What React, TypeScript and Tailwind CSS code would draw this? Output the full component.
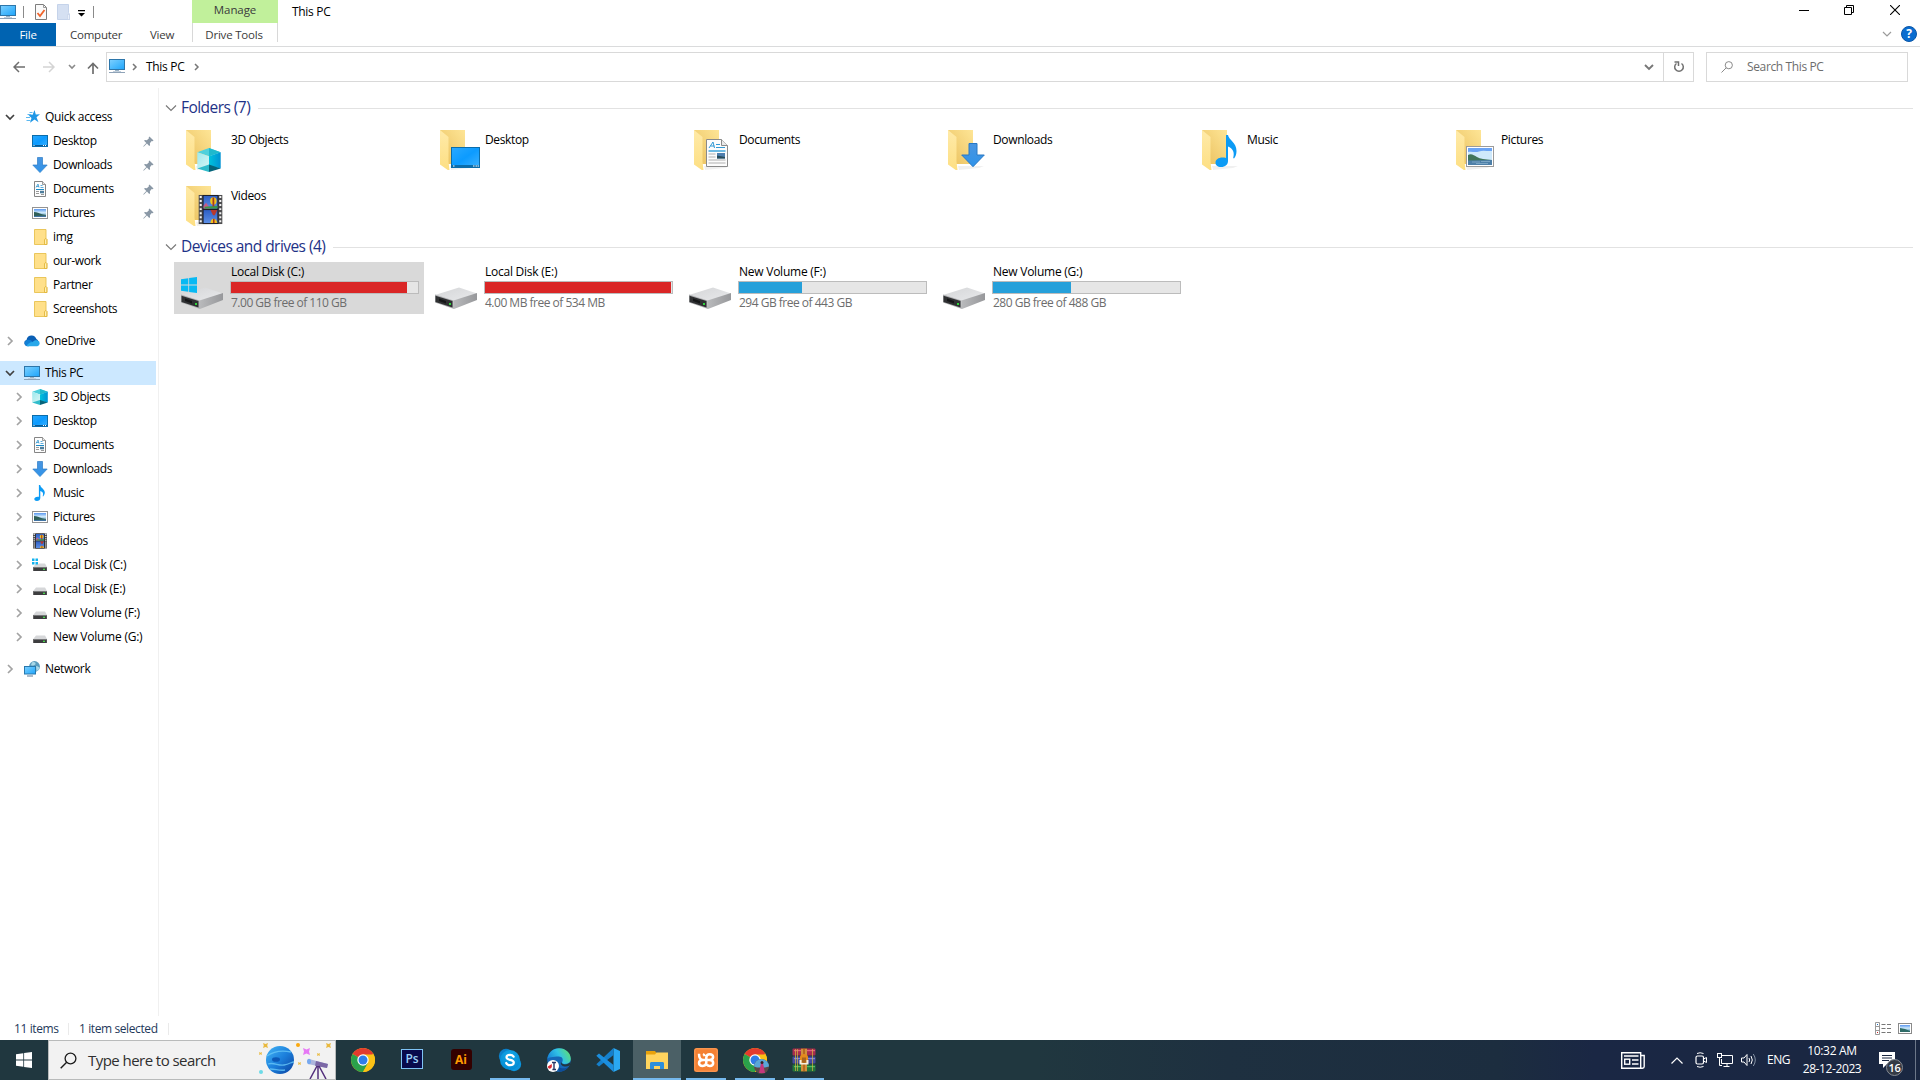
import React from "react";

type IconProps = { className?: string };

/* ---------- shared glyphs ---------- */

function Gradients() {
  return (
    <svg className="absolute h-0 w-0" aria-hidden="true">
      <defs>
        <linearGradient id="screen" x1="0" y1="0" x2="1" y2="1">
          <stop offset="0" stopColor="#7fd0ff" />
          <stop offset="0.5" stopColor="#4dbbfd" />
          <stop offset="1" stopColor="#1ea4fb" />
        </linearGradient>
        <linearGradient id="desk" x1="0" y1="0" x2="1" y2="1">
          <stop offset="0" stopColor="#2aa9ff" />
          <stop offset="0.5" stopColor="#0c9bff" />
          <stop offset="1" stopColor="#3db2ff" />
        </linearGradient>
        <linearGradient id="folderBack" x1="0" y1="1" x2="1" y2="0">
          <stop offset="0" stopColor="#e9bf5c" />
          <stop offset="1" stopColor="#fee596" />
        </linearGradient>
        <linearGradient id="folderFront" x1="0" y1="0" x2="0" y2="1">
          <stop offset="0" stopColor="#ffeaa8" />
          <stop offset="1" stopColor="#fddf83" />
        </linearGradient>
        <linearGradient id="photo" x1="0" y1="0" x2="0" y2="1">
          <stop offset="0" stopColor="#5a97f0" />
          <stop offset="0.45" stopColor="#cfeafb" />
          <stop offset="0.75" stopColor="#7fb0cc" />
          <stop offset="1" stopColor="#2d5f96" />
        </linearGradient>
        <linearGradient id="driveTop" x1="0" y1="0" x2="1" y2="1">
          <stop offset="0" stopColor="#d4d5d7" />
          <stop offset="1" stopColor="#e9eaec" />
        </linearGradient>
        <linearGradient id="driveSide" x1="0" y1="0" x2="1" y2="0">
          <stop offset="0" stopColor="#b9babc" />
          <stop offset="1" stopColor="#97989b" />
        </linearGradient>
        <linearGradient id="arrow" x1="0" y1="0" x2="0" y2="1">
          <stop offset="0" stopColor="#4a95e0" />
          <stop offset="1" stopColor="#2e93ea" />
        </linearGradient>
        <linearGradient id="sky" x1="0" y1="0" x2="0" y2="1">
          <stop offset="0" stopColor="#2e5fc4" />
          <stop offset="1" stopColor="#5c8fe6" />
        </linearGradient>
        <linearGradient id="cubeR" x1="0" y1="0" x2="1" y2="0">
          <stop offset="0" stopColor="#00c2dd" />
          <stop offset="1" stopColor="#0092d4" />
        </linearGradient>
        <linearGradient id="cubeL" x1="0" y1="0" x2="1" y2="1">
          <stop offset="0" stopColor="#9be9ee" />
          <stop offset="1" stopColor="#d9f5f4" />
        </linearGradient>
        <linearGradient id="planet" x1="0" y1="0" x2="1" y2="1">
          <stop offset="0" stopColor="#45b5f5" />
          <stop offset="0.5" stopColor="#1c80dc" />
          <stop offset="1" stopColor="#0a3f9e" />
        </linearGradient>
        <linearGradient id="edge" x1="0" y1="0.6" x2="1" y2="0.2">
          <stop offset="0" stopColor="#1583d8" />
          <stop offset="0.5" stopColor="#31c3e6" />
          <stop offset="1" stopColor="#62e06a" />
        </linearGradient>
        <radialGradient id="skype" cx="0.5" cy="0.3" r="0.8">
          <stop offset="0" stopColor="#14a8e8" />
          <stop offset="1" stopColor="#0086d0" />
        </radialGradient>
      </defs>
    </svg>
  );
}

const Monitor = ({ className = "h-4 w-4" }: IconProps) => (
  <svg viewBox="0 0 16 16" className={className}>
    <rect x="0.5" y="1.5" width="15" height="10" fill="url(#screen)" stroke="#2d76aa" />
    <rect x="6" y="12" width="4" height="1" fill="#9bb3c6" />
    <path d="M0 14h16v1H0z" fill="#8fa3b8" />
    <path d="M4 13h8v1H4z" fill="#c3d0dc" />
  </svg>
);

const Star = () => (
  <svg viewBox="0 0 16 16" className="ml-0.5 -mr-0.5 h-4 w-4">
    <path d="M8.500 1l1.300 4.500 4.200-.2-3.500 2.900 2 5-4-2.700L4 13.700 5.500 9 2.600 6.200l4-.4z" fill="#1f97e6" />
    <path d="M1.500 5.500h4M0 8.500h4M0.500 11.500h4M3.500 3.500h3" stroke="#5cb8f0" strokeWidth="1" />
  </svg>
);

const DesktopIcon = ({ className = "h-4 w-4" }: IconProps) => (
  <svg viewBox="0 0 16 16" className={className}>
    <rect x="0.5" y="2.5" width="15" height="11" fill="url(#desk)" stroke="#0b6dab" />
    <path d="M1 12.5h14" stroke="#0a5a94" strokeWidth="1" />
    <path d="M1.5 12.5h1M11 12.5h1M13 12.5h1" stroke="#fff" strokeWidth="1" />
  </svg>
);

const DownIcon = ({ className = "h-4 w-4" }: IconProps) => (
  <svg viewBox="0 0 16 16" className={className}>
    <path d="M5.5 0.5h5V8h4.7L8 15.6 0.8 8h4.7z" fill="url(#arrow)" stroke="#2b7cc7" strokeWidth="0.7" />
  </svg>
);

const DocIcon = ({ className = "h-4 w-4" }: IconProps) => (
  <svg viewBox="0 0 16 16" className={className}>
    <path d="M2.5 0.5h8l3 3v12h-11z" fill="#fdfdfd" stroke="#858585" />
    <path d="M10.5 0.5v3h3" fill="#e8e8e8" stroke="#858585" strokeWidth="0.8" />
    <path d="M4 6.500l2-3.500 1 3.500M4 5.500h3M8.500 4.500h2M8.500 6.500h3" stroke="#4aa3d6" strokeWidth="0.900" fill="none" />
    <path d="M4 8.500h8" stroke="#1a8ac8" />
    <path d="M4 10.500h3M4 12.500h3M9 13.500h3" stroke="#9a9a9a" />
    <rect x="8" y="9.800" width="4" height="2.500" fill="#4d7d9c" />
  </svg>
);

const PicIcon = ({ className = "h-4 w-4" }: IconProps) => (
  <svg viewBox="0 0 16 16" className={className}>
    <rect x="0.5" y="2.5" width="15" height="11" fill="#fff" stroke="#939393" />
    <rect x="2" y="4" width="12" height="8" fill="url(#photo)" />
    <path d="M2 7c3 .2 5 1.300 8 2.300L14 10v.7L2 11z" fill="#2f5f58" />
  </svg>
);

const FolderSmall = () => (
  <svg viewBox="0 0 16 16" className="h-4 w-4">
    <path d="M2.500 0.500h11.500v9l1 1v5H2.500z" fill="#ffe08a" stroke="#e8c14f" strokeWidth="0.9" />
    <path d="M12.500 15.500v-5l1.500-1 .8 1v5z" fill="#fff0b8" stroke="#dfb02d" strokeWidth="0.800" />
  </svg>
);

const Cloud = () => (
  <svg viewBox="0 0 16 16" className="h-4 w-4">
    <path d="M3 13a3 3 0 01-.5-5.900C3 3.500 5.500 2.300 7.800 2.500c2.200.2 4 1.500 4.600 3.600a3.500 3.500 0 012 3.400L8 13z" fill="#0a5fb5" />
    <path d="M2.300 7.300c2-1.300 4.500-.5 6.500 1.400L5 13.200H3.300a3.200 3.200 0 01-1-5.900z" fill="#1180d6" />
    <path d="M2.500 13.300c1-2.500 3.500-4.300 6.300-4.300 1-1.800 3.200-2.300 4.800-1.500a3 3 0 01-.3 5.800z" fill="#28a8ea" />
  </svg>
);

const Cube = ({ className = "h-4 w-4" }: IconProps) => (
  <svg viewBox="0 0 16 16" className={className}>
    <path d="M0.200 2.800L8 0l7.800 2.800L8 5.500z" fill="#4fd0dc" />
    <path d="M8 0l7.800 2.800L8 5.500z" fill="#1fb9cd" />
    <path d="M0.200 2.800L8 5.500V12l-7.800 1.600z" fill="url(#cubeL)" />
    <path d="M15.800 2.800L8 5.500V12l7.800 1.600z" fill="url(#cubeR)" />
    <path d="M0.200 13.600L8 11v5z" fill="#30bccb" />
    <path d="M15.800 13.600L8 11v5z" fill="#05637a" />
  </svg>
);

const Note = ({ className = "h-4 w-4" }: IconProps) => (
  <svg viewBox="0 0 16 16" className={className}>
    <path d="M6.900 0h1.300c.4 2.900 4.600 4.200 4.600 7.500 0 1.400-.6 2.800-1.700 4l-.4-.3c1-2.700.2-4.700-2.400-5.200V13c0 1.700-1.500 3-3.400 3-1.600 0-2.600-.9-2.600-2 0-1.500 1.700-2.600 4.600-2.200z" fill="#0c9bf5" />
  </svg>
);

const Film = ({ className = "h-4 w-4" }: IconProps) => (
  <svg viewBox="0 0 16 16" preserveAspectRatio="none" className={className}>
    <rect x="1" y="0.500" width="14" height="15" fill="#4d4d4f" />
    <path d="M2.200 1v14M13.800 1v14" stroke="#f2f2f2" strokeWidth="1.200" strokeDasharray="1 1.100" />
    <rect x="3.300" y="0.500" width="9.400" height="15" fill="#1c1c22" />
    <rect x="3.900" y="1" width="8.200" height="6.500" fill="url(#sky)" />
    <rect x="3.900" y="8.300" width="8.200" height="6.700" fill="url(#sky)" />
    <path d="M3.900 6l1.500-1.500 2.500 3h-4z" fill="#c65a86" />
    <path d="M4.500 6.600l7.600-.6v1.500H4.500z" fill="#3a9a4a" />
    <circle cx="9.700" cy="3.600" r="1.900" fill="#f2c51d" />
    <path d="M9.200 1.800h1l.1 4.700h-1.100z" fill="#a83a1d" />
    <path d="M8 8.300h4L10.500 11h-1z" fill="#b8382c" />
    <path d="M8 15c0-3 3.600-3 4 0z" fill="#f0c020" />
    <path d="M9.500 12.800h.9V15h-.9z" fill="#a8361d" />
  </svg>
);

const DriveSmall = ({ win }: { win?: boolean }) => (
  <svg viewBox="0 0 16 16" className="h-4 w-4">
    <path d="M4 6.500h9l2 3.500H1.200z" fill="#d6d7d9" />
    <rect x="1.200" y="10" width="13.700" height="4" fill="#3d3d3f" />
    <path d="M1.200 10h13.700v1H1.200z" fill="#77787a" />
    <rect x="11" y="11.700" width="2" height="1.200" fill="#4be84f" />
    {win && (
      <>
        <rect x="0" y="0" width="6.500" height="7" fill="#fff" />
        <path d="M0 1.500h2.500V4H0zM3.500 1.500H6V4H3.500zM0 5h2.500v2.500H0zM3.500 5H6v2.500H3.500z" fill="#12b2ee" />
      </>
    )}
  </svg>
);

const NetworkIcon = () => (
  <svg viewBox="0 0 16 16" className="h-4 w-4">
    <circle cx="10.500" cy="5.500" r="5.400" fill="#5a9cbd" />
    <path d="M8 1.500c2-1 4 0 3.500 1.500S8 5 7 4zM12 5c2 0 3 1 3.500 2-.500 1.500-2 3-3 3z" fill="#a9d8e8" />
    <rect x="0.500" y="5.500" width="11" height="7.500" fill="url(#screen)" stroke="#2878ad" />
    <path d="M3 15h6" stroke="#8aa0b4" strokeWidth="1.400" />
  </svg>
);

const Pin = () => (
  <svg viewBox="0 0 12 12" className="h-[11px] w-[11px]">
    <path d="M7 0.500l4.500 4.500-1 .8-1-.3-2 2.300.2 2.200-.9.800L4.300 8.300 0.800 11.800 0.300 11.200 3.600 7.600 1.200 5.200l.8-.9 2.200.2 2.300-2-.300-1z" fill="#8a98a6" />
  </svg>
);

/* ---------- large folder and drive icons ---------- */

const overlays: Record<string, React.ReactNode> = {
  "3D Objects": <div className="absolute left-[11px] top-[18px]"><Cube className="h-6 w-6" /></div>,
  Desktop: (
    <svg viewBox="0 0 29 21" className="absolute left-[11px] top-[17px] h-[21px] w-[29px]">
      <rect x="0.500" y="0.500" width="28" height="20" fill="url(#desk)" stroke="#0b6dab" />
      <path d="M1 19h27" stroke="#0b6dab" strokeWidth="2" />
      <path d="M2 19h1.500M22 19h1.500M24.500 19H26M26.500 19H28" stroke="#fff" strokeWidth="1.200" />
    </svg>
  ),
  Documents: (
    <svg viewBox="0 0 22 28" className="absolute left-[12px] top-[9px] h-7 w-[22px]">
      <path d="M0.500 0.500h15l6 6v21h-21z" fill="#fcfcfc" stroke="#8a8a8a" />
      <path d="M15.500 0.500v6h6" fill="#e9e9e9" stroke="#8a8a8a" />
      <path d="M3 9l4-6 1.500 6M4.500 7h3.800M10 5.500h4M10 8.500h9" stroke="#1c8fd0" strokeWidth="0.900" fill="none" />
      <path d="M2.500 12h17" stroke="#0f8fd3" strokeWidth="1.200" />
      <path d="M2.500 15h7M2.500 18h7M2.500 21h17M2.500 24h17" stroke="#b0b0b0" />
      <rect x="11" y="14" width="8" height="5.500" fill="#4f7fae" />
      <path d="M11 16.500l8 1.500v1.500h-8z" fill="#274c5a" />
    </svg>
  ),
  Downloads: (
    <svg viewBox="0 0 24 25" className="absolute left-[13px] top-[13px] h-[25px] w-6">
      <path d="M8 0.500h8V12h7.300L12 23.700 0.700 12H8z" fill="url(#arrow)" stroke="#2878c4" />
    </svg>
  ),
  Music: (
    <svg viewBox="0 0 22 34" className="absolute left-[13px] top-[4px] h-[34px] w-[22px]">
      <path d="M11 1h2c.8 5 8.500 7.500 8.500 16 0 3-.900 5.500-2.500 7.500l-.8-.5c1.700-6-.500-9.500-5.200-11.500v14.500c0 3.500-2.800 6-7 6-3.500 0-5.500-2-5.500-4.300 0-3.800 4.500-6.200 10.500-4.700z" fill="#0c9bf5" />
    </svg>
  ),
  Pictures: (
    <svg viewBox="0 0 28 21" className="absolute left-[10px] top-[16px] h-[21px] w-[28px]">
      <rect x="0.500" y="0.500" width="27" height="20" fill="#fff" stroke="#9b9b9b" />
      <rect x="2" y="2" width="24" height="17" fill="#6ba4f5" />
      <path d="M2 6c4-1 7 1 11-.5s9 0 13-.5v9H2z" fill="#cfe9fb" />
      <path d="M2 9c3-2 6 0 9 2s8 2.500 15 3v1H2z" fill="#40755b" />
      <path d="M2 14.500l24-.5v5H2z" fill="#4d7fa8" />
      <path d="M6 16h8M15 15.500h9M10 17.500h12" stroke="#8db4cf" strokeWidth="0.700" />
    </svg>
  ),
  Videos: <div className="absolute left-[11px] top-[8px]"><Film className="h-[31px] w-[27px]" /></div>,
};

function FolderLarge({ name }: { name: string }) {
  return (
    <div className="relative h-[42px] w-[42px] shrink-0">
      <svg viewBox="0 0 42 42" className="h-[42px] w-[42px]">
        <path d="M10 36h26l-5 2-20 2z" fill="#000" opacity="0.060" />
        <path d="M0 0h25v34H5z" fill="url(#folderBack)" />
        <path d="M0 0l8.500 7v24.500L9.500 40 7.800 40 0 34.500z" fill="url(#folderFront)" />
      </svg>
      {overlays[name]}
    </div>
  );
}

const WinLogo = ({ className }: IconProps) => (
  <svg viewBox="0 0 16 16" className={className}>
    <path d="M0 2.200L7.300 1.200v6.400H0zM8.100 1.100L16 0v7.600H8.100zM0 8.400h7.300v6.400L0 13.800zM8.100 8.400H16V16l-7.900-1.100z" fill="currentColor" />
  </svg>
);

const DriveLarge = ({ win }: { win?: boolean }) => (
  <div className="relative h-[34px] w-[44px] shrink-0">
    <svg viewBox="0 0 44 34" className="h-[34px] w-[44px]">
      <path d="M0 19l24-7.500L42 17.500l-23.500 8z" fill="url(#driveTop)" />
      <path d="M18.500 24.500L42 17v7L19 33z" fill="url(#driveSide)" />
      <path d="M0 18.500l18.500 6L19 33 0 26.500z" fill="#afb0b2" />
      <path d="M0.500 19.700l17 5.300v6.400L0.500 26z" fill="#2f3032" />
      <path d="M4 22.500l7 2.400v2.500L4 25z" fill="#151617" />
      <rect x="14" y="27" width="2" height="2" fill="#30d33c" />
    </svg>
    {win && <WinLogo className="absolute left-0 top-[1px] h-4 w-4 text-[#08b9f3]" />}
  </div>
);

/* ---------- explorer window ---------- */

const Chevron = ({ open, className = "" }: { open?: boolean; className?: string }) => (
  <svg viewBox="0 0 10 10" className={"h-[10px] w-[10px] shrink-0 " + className}>
    {open ? (
      <path d="M1 3l4 4 4-4" fill="none" stroke="#404040" strokeWidth="1.700" />
    ) : (
      <path d="M3 1l4 4-4 4" fill="none" stroke="#a3a3a3" strokeWidth="1.700" />
    )}
  </svg>
);

function TitleBar() {
  return (
    <div className="flex h-[47px] shrink-0 border-b border-[#dadbdc]">
      <div className="flex w-[192px] flex-col">
        <div className="flex h-[23px] items-center">
          <Monitor />
          <div className="ml-[7px] h-3 w-px bg-[#8a8a8a]" />
          <svg viewBox="0 0 12 16" className="ml-[11px] h-4 w-3">
            <path d="M0.500 0.500h8l3 3v12H0.500z" fill="#fafafa" stroke="#7d7d7d" />
            <path d="M8.500 0.500v3h3" fill="none" stroke="#9a9a9a" />
            <path d="M2.500 9l2.500 3 4.500-6" fill="none" stroke="#f0642b" strokeWidth="1.800" />
          </svg>
          <svg viewBox="0 0 13 16" className="ml-[10px] h-4 w-[13px]">
            <path d="M0.500 0.500h11v8l1 2v5h-12z" fill="#d5e0f2" stroke="#c5d3ea" />
            <path d="M10.500 15.500v-5h2v5z" fill="#eaf0f9" stroke="#c5d3ea" strokeWidth="0.700" />
          </svg>
          <svg viewBox="0 0 7 7" className="ml-2 mt-[3px] h-[7px] w-[7px]">
            <path d="M0 0h7v1.300H0zM0 3h7L3.500 6.500z" fill="#000" />
          </svg>
          <div className="ml-[8px] h-3 w-px bg-[#8a8a8a]" />
        </div>
        <div className="flex h-[23px] items-center text-[11.5px] tracking-[-0.240px] text-[#3b3b3b]">
          <div className="flex h-full w-14 items-center justify-center bg-[#0063b1] text-white">File</div>
          <div className="ml-[14px] w-[51px]">Computer</div>
          <div className="ml-[29px]">View</div>
        </div>
      </div>
      <div className="w-[86px] text-center text-[11.5px] tracking-[-0.200px] text-[#3b3b3b]">
        <div className="h-[23px] bg-[#c1f09b] leading-[20px] tracking-[-0.100px]">Manage</div>
        <div className="h-[19px] border-x border-[#d8d8d8] pr-[2px] leading-[23px]">Drive Tools</div>
      </div>
      <div className="ml-[14px] text-[12px] leading-[24px] tracking-[-0.3px]">This PC</div>
      <div className="ml-auto flex flex-col">
        <div className="flex h-[23px] text-black">
          <svg viewBox="0 0 10 10" className="ml-[3px] mt-[5px] h-[10px] w-[10px]"><path d="M0 5.500h10" stroke="#000" /></svg>
          <svg viewBox="0 0 10 10" className="ml-[35px] mt-[5px] h-[10px] w-[10px]">
            <path d="M0.500 2.500h7v7h-7zM2.500 2.500v-2h7v7h-2" fill="none" stroke="#000" />
          </svg>
          <svg viewBox="0 0 10 10" className="ml-[36px] mr-[20px] mt-[5px] h-[10px] w-[10px]"><path d="M0 0l10 10M10 0L0 10" stroke="#000" strokeWidth="1.100" /></svg>
        </div>
        <div className="flex items-center justify-end">
          <svg viewBox="0 0 10 6" className="mr-[9px] mt-[2px] h-[6px] w-[10px]"><path d="M1 1l4 4 4-4" fill="none" stroke="#9b9b9b" strokeWidth="1.200" /></svg>
          <div className="mr-[3px] mt-[3px] flex h-4 w-4 items-center justify-center rounded-full border border-[#0a56a8] bg-[#0a6dd0] text-[12px] font-bold leading-none text-white">?</div>
        </div>
      </div>
    </div>
  );
}

const Crumb = () => (
  <svg viewBox="0 0 6 8" className="h-2 w-[6px]"><path d="M1 1l3 3-3 3" fill="none" stroke="#777" strokeWidth="1.500" /></svg>
);

function AddressBar() {
  return (
    <div className="flex h-[41px] shrink-0 items-start pt-[5px]">
      <div className="flex h-[30px] w-[106px] shrink-0 items-center">
        <svg viewBox="0 0 12 12" className="ml-[13px] h-3 w-3"><path d="M12 6H1.500M6 1L1 6l5 5" fill="none" stroke="#6e6e6e" strokeWidth="1.500" /></svg>
        <svg viewBox="0 0 12 12" className="ml-[18px] h-3 w-3"><path d="M0 6h10.500M6 1l5 5-5 5" fill="none" stroke="#d4d4d4" strokeWidth="1.500" /></svg>
        <svg viewBox="0 0 8 6" className="ml-[13px] h-[6px] w-2"><path d="M1 1l3 3 3-3" fill="none" stroke="#8a8a8a" strokeWidth="1.600" /></svg>
        <svg viewBox="0 0 12 12" className="ml-[11px] mt-[2px] h-3 w-3"><path d="M6 12V1.500M1 6.500l5-5 5 5" fill="none" stroke="#6e6e6e" strokeWidth="1.700" /></svg>
      </div>
      <div className="flex h-[30px] w-[1588px] shrink-0 items-center border border-[#d9d9d9] text-[12px] tracking-[-0.3px]">
        <div className="ml-[2px] mt-[-2px]"><Monitor /></div>
        <div className="ml-[7px]"><Crumb /></div>
        <div className="ml-[8px] w-[39px] whitespace-nowrap">This PC</div>
        <div className="ml-[9px]"><Crumb /></div>
        <svg viewBox="0 0 10 7" className="ml-auto mr-[9px] h-[7px] w-[10px]"><path d="M1 1l4 4 4-4" fill="none" stroke="#777" strokeWidth="1.900" /></svg>
        <div className="flex h-full w-[30px] items-center justify-center border-l border-[#d9d9d9]">
          <svg viewBox="0 0 12 12" className="h-3 w-3"><path d="M8.500 2.500A4.300 4.300 0 113.500 2.500" fill="none" stroke="#707070" strokeWidth="1.500" /><path d="M1.500 1h4v4" fill="none" stroke="#707070" strokeWidth="1.500" /></svg>
        </div>
      </div>
      <div className="ml-3 flex h-[30px] w-[202px] items-center border border-[#d9d9d9] text-[12px] tracking-[-0.370px] text-[#6d6d6d]">
        <svg viewBox="0 0 12 12" className="ml-[14px] mr-[14px] h-3 w-3"><circle cx="7.800" cy="4.200" r="3.600" fill="none" stroke="#8a8a8a" /><path d="M5.200 6.800L0.500 11.500" stroke="#8a8a8a" /></svg>
        Search This PC
      </div>
    </div>
  );
}

type Row = { label: string; icon: React.ReactNode; pinned?: boolean; exp?: boolean };

const quick: Row[] = [
  { label: "Desktop", icon: <DesktopIcon />, pinned: true },
  { label: "Downloads", icon: <DownIcon />, pinned: true },
  { label: "Documents", icon: <DocIcon />, pinned: true },
  { label: "Pictures", icon: <PicIcon />, pinned: true },
  { label: "img", icon: <FolderSmall /> },
  { label: "our-work", icon: <FolderSmall /> },
  { label: "Partner", icon: <FolderSmall /> },
  { label: "Screenshots", icon: <FolderSmall /> },
];

const pc: Row[] = [
  { label: "3D Objects", icon: <Cube />, exp: true },
  { label: "Desktop", icon: <DesktopIcon />, exp: true },
  { label: "Documents", icon: <DocIcon />, exp: true },
  { label: "Downloads", icon: <DownIcon />, exp: true },
  { label: "Music", icon: <Note />, exp: true },
  { label: "Pictures", icon: <PicIcon />, exp: true },
  { label: "Videos", icon: <Film />, exp: true },
  { label: "Local Disk (C:)", icon: <DriveSmall win />, exp: true },
  { label: "Local Disk (E:)", icon: <DriveSmall />, exp: true },
  { label: "New Volume (F:)", icon: <DriveSmall />, exp: true },
  { label: "New Volume (G:)", icon: <DriveSmall />, exp: true },
];

/* Labels with a drive letter are set a little looser than plain ones. */
const labelTracking = (label: string) => (label.endsWith(":)") ? "tracking-[-0.230px]" : "tracking-[-0.380px]");

const Root = ({ label, icon, open, selected }: { label: string; icon: React.ReactNode; open?: boolean; selected?: boolean }) => (
  <div className={"flex h-6 w-[156px] items-center " + (selected ? "bg-[#cce8ff]" : "")}>
    <Chevron open={open} className="ml-[5px] mr-[9px]" />
    {icon}
    <span className="ml-[5px]">{label}</span>
  </div>
);

const Child = ({ row }: { row: Row }) => (
  <div className="flex h-6 w-[156px] items-center">
    <div className="flex w-8 justify-center pl-[5px]">{row.exp && <Chevron />}</div>
    {row.icon}
    <span className={"ml-[5px] " + labelTracking(row.label)}>{row.label}</span>
    {row.pinned && <div className="ml-auto mr-[2px]"><Pin /></div>}
  </div>
);

function Sidebar() {
  return (
    <div className="w-[159px] shrink-0 whitespace-nowrap border-r border-[#f0f0f0] pt-[17px] text-[12px] tracking-[-0.340px]">
      <Root label="Quick access" icon={<Star />} open />
      {quick.map((r) => <Child key={r.label} row={r} />)}
      <div className="mt-2"><Root label="OneDrive" icon={<Cloud />} /></div>
      <div className="mt-2"><Root label="This PC" icon={<Monitor />} open selected /></div>
      {pc.map((r) => <Child key={r.label} row={r} />)}
      <div className="mt-2"><Root label="Network" icon={<NetworkIcon />} /></div>
    </div>
  );
}

const GroupHeading = ({ title, count }: { title: string; count: number }) => (
  <div className="flex h-6 items-center text-[15.500px] tracking-[-0.550px] text-[#1e3287]">
    <svg viewBox="0 0 12 8" className="mr-[4px] h-2 w-3"><path d="M1 1.500l5 5 5-5" fill="none" stroke="#7a7a7a" strokeWidth="1.200" /></svg>
    <span>{title} ({count})</span>
    <div className="ml-2 mr-[7px] h-px flex-1 bg-[#e2e2e2]" />
  </div>
);

const folders = ["3D Objects", "Desktop", "Documents", "Downloads", "Music", "Pictures", "Videos"];

const drives = [
  { name: "Local Disk (C:)", free: "7.00 GB free of 110 GB", used: 94, full: true, win: true },
  { name: "Local Disk (E:)", free: "4.00 MB free of 534 MB", used: 99.400, full: true },
  { name: "New Volume (F:)", free: "294 GB free of 443 GB", used: 33.700 },
  { name: "New Volume (G:)", free: "280 GB free of 488 GB", used: 41.500 },
];

function Main() {
  return (
    <div className="flex-1 whitespace-nowrap pl-[6px] pt-[8px] text-[12px] tracking-[-0.350px]">
      <GroupHeading title="Folders" count={7} />
      <div className="ml-[9px] mt-[4px] grid grid-cols-[repeat(6,250px)] gap-x-1 gap-y-1">
        {folders.map((f) => (
          <div key={f} className="flex h-[52px] pl-[12px] pt-[6px]">
            <FolderLarge name={f} />
            <span className="ml-[3px] mt-[2px] h-4 leading-4">{f}</span>
          </div>
        ))}
      </div>
      <div className="mt-[3px]"><GroupHeading title="Devices and drives" count={4} /></div>
      <div className="ml-[9px] mt-[3px] flex gap-1">
        {drives.map((d) => (
          <div key={d.name} className={"flex h-[52px] w-[250px] pl-[7px] " + (d.win ? "bg-[#d9d9d9]" : "")}>
            <div className="pt-[14px]"><DriveLarge win={d.win} /></div>
            <div className="ml-[5px] w-[189px]">
              <div className="ml-px mt-[2px] h-[17px] leading-4 tracking-[-0.240px]">{d.name}</div>
              <div className="h-[13px] border border-[#bcbcbc] bg-[#e6e6e6]">
                <div className={"h-full " + (d.full ? "bg-[#da2626]" : "bg-[#26a0da]")} style={{ width: `${d.used}%` }} />
              </div>
              <div className="ml-px mt-px h-4 leading-4 tracking-[-0.500px] text-[#6d6d6d]">{d.free}</div>
            </div>
          </div>
        ))}
      </div>
    </div>
  );
}

function StatusBar() {
  return (
    <div className="flex h-6 shrink-0 items-center pl-[14px] pt-px text-[12px] tracking-[-0.400px] text-[#1e395b]">
      <span className="w-[54px]">11 items</span>
      <div className="h-3 w-px bg-[#eaeaea]" />
      <span className="ml-[10px] w-[89px] whitespace-nowrap">1 item selected</span>
      <div className="h-3 w-px bg-[#eaeaea]" />
      <svg viewBox="0 0 16 13" className="mb-px ml-auto mr-[7px] h-[13px] w-4">
        <path d="M0.500 0.500h4v12h-4zM0.500 4.500h4M0.500 8.500h4" fill="none" stroke="#999" />
        <path d="M6.500 2.500h4M12 2.500h4M6.500 6.500h4M12 6.500h4M6.500 10.500h4M12 10.500h4" stroke="#777" />
        <path d="M2 10.500h1" stroke="#c22" />
        <path d="M2 2.500h1" stroke="#1a6fc0" />
      </svg>
      <svg viewBox="0 0 14 11" className="mb-px mr-2 h-[11px] w-[14px]">
        <rect x="0.500" y="0.500" width="13" height="10" fill="#fff" stroke="#8a8a8a" />
        <rect x="2" y="2" width="10" height="7" fill="url(#photo)" />
        <path d="M2 5l5 1 5 2v1H2z" fill="#2e6b66" />
      </svg>
    </div>
  );
}

/* ---------- taskbar ---------- */

const Chrome = () => (
  <svg viewBox="0 0 24 24" className="h-6 w-6">
    <circle cx="12" cy="12" r="12" fill="#fbc116" />
    <path d="M12 12L1.610 6A12 12 0 0122.390 6z" fill="#e33b2e" />
    <path d="M1.610 6A12 12 0 0012 24l5.200-9-5.200-3z" fill="#2aa14b" />
    <path d="M12 6.500h10.700A12 12 0 0112 24l5-9z" fill="#fbc116" />
    <circle cx="12" cy="12" r="5.700" fill="#fff" />
    <circle cx="12" cy="12" r="4.500" fill="#2f7de9" />
  </svg>
);

const Skype = () => (
  <svg viewBox="0 0 24 24" className="h-6 w-6">
    <circle cx="8" cy="8" r="7.200" fill="#0a7fc9" />
    <circle cx="16" cy="16" r="7.200" fill="#0a94dd" />
    <circle cx="12" cy="12" r="10" fill="url(#skype)" />
    <path d="M15.600 8.700c-.8-1.300-2-1.800-3.600-1.800-2 0-3.500.9-3.500 2.400 0 3.500 7.300 1.700 7.300 5.200 0 1.700-1.500 2.700-3.700 2.700-1.900 0-3.200-.7-3.900-2.200" fill="none" stroke="#fff" strokeWidth="2.200" strokeLinecap="round" />
  </svg>
);

const Edge = () => (
  <svg viewBox="0 0 24 24" className="h-6 w-6">
    <circle cx="12" cy="12" r="11.800" fill="#1668b8" />
    <path d="M0.300 11C1.500 4 6.500 0.200 12 0.200c7 0 11.800 5 11.800 10.600 0 3.500-2.800 5.200-6 5.200-2.500 0-3.300-1-2.500-2.300 1.200-2 .2-5.200-3.500-5.200C6 8.500 1 9.500 0.300 11z" fill="url(#edge)" />
    <path d="M9 13c-1 4 3 7.500 7.500 7.300 2 0 4-.7 5-1.500A12 12 0 0112 23.800" fill="#0e4d9a" />
    <path d="M14 14c1 3 6 3.500 9.700 0l-1 3.500c-4 2.500-10 .5-8.700-3.500z" fill="#22373f" />
    <circle cx="6" cy="18" r="6" fill="#fff" />
    <path d="M5 14.500h4M7 14.500v7M5.400 21.500H9" stroke="#2a3664" strokeWidth="1.400" fill="none" />
    <path d="M0.800 18.500l4-2.500v3c-1 2-2.500 2-3.500 1z" fill="#dc2a35" />
  </svg>
);

const VSCode = () => (
  <svg viewBox="0 0 24 24" className="h-6 w-6">
    <path d="M17.500 0L24 3v18l-6.500 3z" fill="#2aa8f2" />
    <path d="M17.500 0v7L3 18.500 0.300 16.300z" fill="#1580cc" />
    <path d="M17.500 24v-7L3 5.500 0.300 7.700z" fill="#1b8ede" />
  </svg>
);

const ExplorerIcon = () => (
  <svg viewBox="0 0 22 18" className="h-[18px] w-[22px]">
    <path d="M0 0h9l1.500 2H22v16H0z" fill="#e8a20c" />
    <path d="M0 3.500h9L10.500 1.500H22V18H0z" fill="#ffd45e" />
    <path d="M4 18v-5.500c0-1 .7-1.500 1.500-1.500h11c.8 0 1.500.500 1.500 1.500V18h-4v-3H8v3z" fill="#2d8fdb" />
  </svg>
);

const Xampp = () => (
  <svg viewBox="0 0 24 24" className="h-6 w-6">
    <rect width="24" height="24" rx="2.500" fill="#f58133" />
    <rect x="0.800" y="0.800" width="22.400" height="22.400" rx="2" fill="none" stroke="#fba467" strokeWidth="0.800" />
    <path d="M5 5.800c0 3.600 1.200 6.200 4.200 6.200h6.300c2.300 0 3.600-1.200 3.600-2.900 0-1.800-1.400-2.900-3.300-2.900-2.100 0-3.500 1.300-3.500 3.300v5c0 2.100-1.300 3.400-3.500 3.400-2.300 0-3.800-1.100-3.800-2.900S6.600 12 9 12M15.500 12c2.300 0 3.700 1.200 3.700 3s-1.400 2.900-3.400 2.900c-1.200 0-2.300-.5-2.900-1.400M9 6c1 .5 1.500 1.200 1.800 2.200" fill="none" stroke="#fff" strokeWidth="2.500" />
  </svg>
);

const WinRar = () => (
  <svg viewBox="0 0 24 24" className="h-6 w-6">
    <rect x="0.500" y="0.500" width="23" height="7" rx="1" fill="#a72d4e" />
    <path d="M2 2h21v1.200H2z" fill="#e0607e" />
    <rect x="0.500" y="8.500" width="23" height="7" rx="1" fill="#474a9e" />
    <path d="M2 10h21v1.200H2z" fill="#7f84d8" />
    <rect x="0.500" y="16.500" width="23" height="7" rx="1" fill="#23743c" />
    <path d="M2 18h21v1.200H2z" fill="#4fbd64" />
    <path d="M3.500 1v22M5.500 1v22M20.500 1v22" stroke="#d5b93d" strokeWidth="0.700" />
    <rect x="9" y="0.500" width="6" height="23" fill="#b96a20" />
    <path d="M10 1v22M14 1v22" stroke="#e9b95a" />
    <path d="M8 9c0-4 8-4 8 0v3H8z" fill="#e58a1c" />
    <path d="M7.500 12h2v3h5v-3h2v4.500h-9z" fill="#f5efe0" />
    <rect x="10" y="9.500" width="4" height="5" fill="#a8641e" />
  </svg>
);

const SpaceArt = () => (
  <svg viewBox="0 0 76 38" className="h-[38px] w-[76px]">
    <circle cx="22" cy="19" r="14" fill="url(#planet)" />
    <path d="M9 15c7-5 15-6 24-4M10 23c6-2 10 2 16 1s7-3 10-3M12 28c6 0 9 2 15 1" stroke="#68c7f8" strokeWidth="1.300" fill="none" opacity="0.800" />
    <ellipse cx="18" cy="18.500" rx="4" ry="2.300" fill="#0c58b7" />
    <g fill="#e9b93f">
      <path d="M5 2l2.500 1L10 2l-.8 2.500L10 7 7.500 6 5 7l.8-2.500zM1 11l1.500.7L4 11l-.4 1.500L4 14l-1.500-.7L1 14l.4-1.500zM68 2l2.500 1L73 2l-.8 2.500L73 7l-2.500-1L68 7l.8-2.500zM59 12l1.500.7 1.500-.7-.4 1.500L62 15l-1.500-.7L59 15l.4-1.500zM40 21l1.500.7L43 21l-.4 1.500L43 24l-1.500-.7L40 24l.4-1.500z" />
    </g>
    <circle cx="40" cy="4" r="2" fill="#fba90f" />
    <circle cx="3" cy="31" r="2" fill="#6cdbe8" />
    <path d="M45 7l3.500 1.500L52 7l-1 3.500 1 3.500-3.500-1.500L45 14l1-3.500z" fill="#e679f5" />
    <path d="M51 18l19 5-1 4-19-4z" fill="#aeb6dd" />
    <path d="M58 20l12 3-1 4-12-2.300z" fill="#7c68a6" />
    <ellipse cx="51" cy="20.500" rx="2" ry="2.800" fill="#78a9ee" />
    <path d="M59 25l-7 13M60 25v13M61 25l7 13" stroke="#53307c" strokeWidth="1.500" />
  </svg>
);

function TaskButton({ children, active, running }: { children: React.ReactNode; active?: boolean; running?: boolean }) {
  return (
    <div className={"relative flex h-10 w-12 items-center justify-center " + (active ? "bg-[#4b6066]" : "")}>
      {children}
      {running && <div className={"absolute bottom-0 h-0.5 bg-[#76b9ed] " + (active ? "inset-x-0" : "inset-x-1")} />}
    </div>
  );
}

function Taskbar() {
  return (
    <div className="flex h-10 shrink-0 items-center bg-[linear-gradient(to_right,#20373f_0%,#20373f_54%,#1e3040_64%,#1c2d3f_78%,#1a2744_83%,#1a2741_100%)] text-white">
      <div className="flex w-12 justify-center"><WinLogo className="h-4 w-4 text-white" /></div>
      <div className="flex h-10 w-[288px] items-center border border-[#b9bbbb] bg-[#f2f2f2] text-[15px] tracking-[-0.550px] text-[#2f2f2f]">
        <svg viewBox="0 0 17 17" className="ml-[11px] h-[17px] w-[17px]"><circle cx="10.500" cy="6.500" r="5.400" fill="none" stroke="#1c1c1c" strokeWidth="1.300" /><path d="M6.700 10.300L0.700 16.300" stroke="#1c1c1c" strokeWidth="1.400" /></svg>
        <span className="ml-[11px] whitespace-nowrap">Type here to search</span>
        <div className="ml-auto mr-px"><SpaceArt /></div>
      </div>
      <div className="ml-[3px] flex items-center gap-px">
        <TaskButton><Chrome /></TaskButton>
        <TaskButton>
          <div className="mb-[3px] flex h-5 w-[22px] items-center justify-center border border-[#7fc3f5] bg-[#080a4c] text-[12px] font-semibold leading-none text-[#9bd1f7]">Ps</div>
        </TaskButton>
        <TaskButton>
          <div className="mb-px flex h-[21px] w-[21px] items-center justify-center rounded-[3px] bg-[#330000] text-[12px] font-bold leading-none text-[#ff9a00]">Ai</div>
        </TaskButton>
        <TaskButton running><Skype /></TaskButton>
        <TaskButton><Edge /></TaskButton>
        <TaskButton><VSCode /></TaskButton>
        <TaskButton active running><ExplorerIcon /></TaskButton>
        <TaskButton running>
          <Xampp />
          <div className="absolute bottom-0 right-1 h-0.5 w-[9px] bg-[#557fa6]" />
        </TaskButton>
        <TaskButton running>
          <Chrome />
          <svg viewBox="0 0 15 15" className="absolute bottom-[6px] right-[10px] h-[15px] w-[15px]">
            <circle cx="7.500" cy="7.500" r="7.500" fill="#5d4a48" />
            <path d="M0 7.500a7.500 7.500 0 0115 0l-4 1H3z" fill="#5aa7d8" />
            <path d="M7 4h2l2 10H5z" fill="#c4377c" />
            <circle cx="8" cy="3.500" r="1.500" fill="#3a2222" />
          </svg>
        </TaskButton>
        <TaskButton running><WinRar /></TaskButton>
      </div>

      <div className="ml-auto flex h-10 items-center text-[12px] tracking-[-0.300px]">
        <svg viewBox="0 0 24 17" className="h-[17px] w-6">
          <path d="M0.700 0.700h19v15.500h-19zM19.700 3.500h3.500v11c0 1-.7 1.700-1.800 1.700H18" fill="none" stroke="#fff" strokeWidth="1.400" />
          <path d="M3 4h14.500M11 8h6.500M11 12h6.500" stroke="#fff" strokeWidth="1.300" />
          <rect x="3.700" y="7.200" width="5" height="5" fill="none" stroke="#fff" strokeWidth="1.400" />
        </svg>
        <svg viewBox="0 0 12 7" className="ml-[26px] h-[7px] w-3"><path d="M0.500 6.500L6 1l5.500 5.500" fill="none" stroke="#fff" strokeWidth="1.200" /></svg>
        <svg viewBox="0 0 12 16" className="ml-[12px] h-4 w-3">
          <path d="M2 1.500Q5 0 8.500 1.500M2 14.500Q5 16 8.500 14.500" fill="none" stroke="#fff" />
          <rect x="1" y="4" width="7.500" height="8" rx="1.500" fill="none" stroke="#fff" strokeWidth="1.200" />
          <path d="M8.500 7l3-1.500v5L8.500 9" fill="none" stroke="#fff" />
        </svg>
        <svg viewBox="0 0 16 14" className="ml-[10px] h-[14px] w-4">
          <path d="M4 2.500h11.500v8H4.500V6M10 10.500v3M6.500 13.500h6M2.500 5v7.500H5" fill="none" stroke="#fff" />
          <rect x="0.500" y="0.500" width="4" height="4" fill="none" stroke="#fff" />
        </svg>
        <svg viewBox="0 0 16 14" className="ml-2 h-[14px] w-4">
          <path d="M0.500 5h2.500l3-3.500v11L3 9H0.500z" fill="none" stroke="#fff" />
          <path d="M8 5q1.300 2 0 4M10 3q2.600 4 0 8" fill="none" stroke="#fff" />
          <path d="M12.300 1q4 6 0 12" fill="none" stroke="#8390a2" />
        </svg>
        <span className="ml-[10px] w-[23px] tracking-[-0.500px]">ENG</span>
        <div className="ml-[8px] w-[68px] whitespace-nowrap text-center leading-[18px]">
          <div>10:32 AM</div>
          <div className="tracking-[-0.400px]">28-12-2023</div>
        </div>
        <div className="relative ml-[13px] h-10 w-[36px]">
          <svg viewBox="0 0 16 16" className="absolute left-0 top-[12px] h-4 w-4">
            <path d="M0 0h16v12h-8l-4 4v-4H0z" fill="#fff" />
            <path d="M3 3.500h10M3 6h10M3 8.500h7" stroke="#1a2741" />
          </svg>
          <div className="absolute left-[7px] top-[19px] flex h-[17px] w-[17px] items-center justify-center rounded-full border border-[#858b93] bg-[#343a45] text-[11px] font-semibold leading-none">16</div>
        </div>
        <div className="mr-1 h-10 w-px bg-[#6c7789]" />
      </div>
    </div>
  );
}

export default function App() {
  return (
    <div className="flex h-[1080px] w-[1920px] flex-col overflow-hidden bg-white font-['Open_Sans','Noto_Sans',sans-serif] text-black">
      <Gradients />
      <TitleBar />
      <AddressBar />
      <div className="flex min-h-0 flex-1">
        <Sidebar />
        <Main />
      </div>
      <StatusBar />
      <Taskbar />
    </div>
  );
}
